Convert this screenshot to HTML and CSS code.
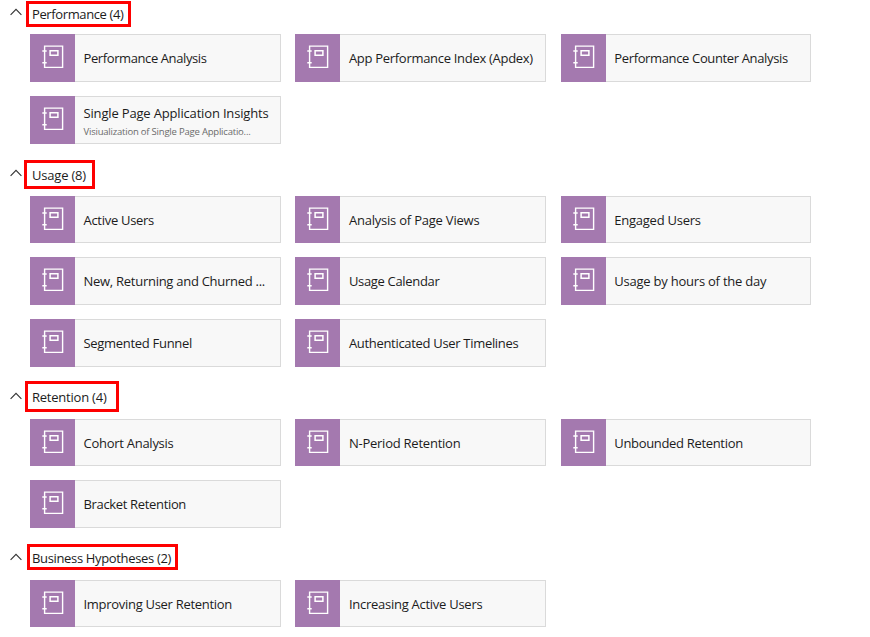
FILE: index.html
```
<!DOCTYPE html>
<html lang="en">
<head>
<meta charset="utf-8">
<title>Workbooks</title>
<link rel="stylesheet" href="styles.css">
</head>
<body>
<svg class="defs" width="0" height="0" aria-hidden="true">
<symbol id="book" viewBox="0 0 22 24"><path d="M2.6 1.1H20.6V22.4H2.6ZM.3 6H4.7M.3 17.8H4.7" fill="none" stroke="#fff" stroke-width="1.4"/><path d="M8.1 5.8H15.9V10.2H8.1Z" fill="none" stroke="#fff" stroke-width="1.5"/></symbol>
<symbol id="chevron" viewBox="0 0 12 8"><path d="M.6 6.8L6 1.4L11.4 6.8" fill="none" stroke="#333" stroke-width="1.1"/></symbol>
</svg>
<main id="gallery"></main>
<script src="app.js"></script>
</body>
</html>
```
FILE: styles.css
```
body { margin: 0; background: #fff; color: #1c1c1c; font-family: "Open Sans", "Noto Sans", sans-serif; font-size: 13px; overflow: hidden; }
.defs { display: block; }
#gallery { width: 870px; }
.section + .section { margin-top: 17.5px; }
.header { display: flex; height: 34.45px; padding-left: 9.5px; }
.chevron { width: 12px; height: 8px; margin: 8px 10.5px 0 0; }
.label { position: relative; height: 28px; line-height: 28px; white-space: nowrap; }
.section:nth-child(n+3) .label { line-height: 27.8px; }
.mark { position: absolute; box-sizing: border-box; border: 3px solid #fe0000; }
.mark-performance { left: -6px; top: 1px; width: 105px; height: 26px; }
.mark-usage { left: -8px; top: -1px; width: 71px; height: 29px; }
.mark-retention { left: -7px; top: -3.4px; width: 94px; height: 31px; }
.mark-business { left: -5px; top: -1px; width: 151px; height: 26px; }
.cards { display: grid; grid-template-columns: repeat(3, 250.6px); column-gap: 14.8px; row-gap: 14.6px; padding-left: 30px; }
.card { display: flex; box-sizing: border-box; height: 47.3px; background: #f8f8f8; border: 1px solid #dadada; border-left: 0; }
.icon { flex: none; width: 45px; margin: -1px 0; background: #a479af; }
.icon svg { display: block; width: 22px; height: 24px; margin: 11px 0 0 12px; }
.text { display: flex; flex-direction: column; justify-content: center; margin: 1.7px 0 0 8.5px; white-space: nowrap; }
.title { line-height: 19px; }
.sub { font-size: 9.5px; line-height: 13px; padding-top: 1.6px; color: #6b6b6b; }
```
FILE: app.js
```
const sections = [
  ["Performance (4)", 91.5, "performance", [["Performance Analysis", 123], ["App Performance Index (Apdex)", 184], ["Performance Counter Analysis", 173.5], ["Single Page Application Insights", 185, "Visiualization of Single Page Applicatio...", 167]]],
  ["Usage (8)", 54, "usage", [["Active Users", 70.5], ["Analysis of Page Views", 130.5], ["Engaged Users", 86.5], ["New, Returning and Churned ...", 181.5], ["Usage Calendar", 90.5], ["Usage by hours of the day", 152], ["Segmented Funnel", 108.5], ["Authenticated User Timelines", 169.5]]],
  ["Retention (4)", 74.5, "retention", [["Cohort Analysis", 90], ["N-Period Retention", 111.5], ["Unbounded Retention", 128.5], ["Bracket Retention", 102.5]]],
  ["Business Hypotheses (2)", 139, "business", [["Improving User Retention", 148.5], ["Increasing Active Users", 133.5]]]
];
const make = (cls, parent, html) => {
  const el = document.createElement("div");
  el.className = cls;
  if (html) el.innerHTML = html;
  parent.append(el);
  return el;
};
// Tracks the letters so a text run takes up its intended width.
const fit = (parent, text, width) => {
  const span = document.createElement("span");
  span.textContent = text;
  parent.append(span);
  const gap = (width - span.getBoundingClientRect().width) / text.length;
  span.style.letterSpacing = gap.toFixed(3) + "px";
};
const gallery = document.getElementById("gallery");
for (const [name, width, key, items] of sections) {
  const section = make("section", gallery);
  const header = make("header", section, '<svg class="chevron"><use href="#chevron"/></svg>');
  const label = make("label", header);
  fit(label, name, width);
  make("mark mark-" + key, label);
  const cards = make("cards", section);
  for (const [title, w, sub, sw] of items) {
    const card = make("card", cards);
    make("icon", card, '<svg><use href="#book"/></svg>');
    const text = make("text", card);
    fit(make("title", text), title, w);
    if (sub) fit(make("sub", text), sub, sw);
  }
}
```
